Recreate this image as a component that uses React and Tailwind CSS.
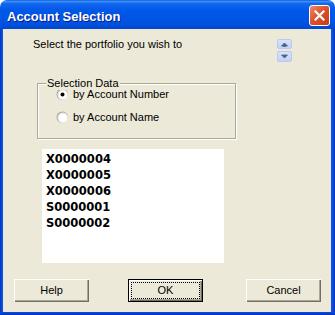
import React from "react";

const FONT = { fontFamily: '"Liberation Sans", Arial, sans-serif' };

function Radio({ checked }) {
  return (
    <svg width="13" height="13" viewBox="0 0 13 13" className="shrink-0">
      <defs>
        <linearGradient id={checked ? "rg1" : "rg2"} x1="0" y1="0" x2="1" y2="1">
          <stop offset="0" stopColor="#8d8b80" />
          <stop offset="0.5" stopColor="#c9c6b8" />
          <stop offset="1" stopColor="#ffffff" />
        </linearGradient>
      </defs>
      <circle cx="6.5" cy="6.5" r="6" fill={`url(#${checked ? "rg1" : "rg2"})`} />
      <circle cx="6.5" cy="6.5" r="4.8" fill="#ffffff" />
      <path d="M2.4 8.6 A4.8 4.8 0 0 1 8.6 2.4" stroke="#e2e0d6" strokeWidth="1" fill="none" />
      {checked && <circle cx="6.5" cy="6.5" r="2" fill="#000000" />}
    </svg>
  );
}

function SpinBtn({ up, h }) {
  return (
    <div
      className={`w-[15px] ${h} rounded-[2px] border border-[#b9c9ef] bg-[linear-gradient(to_bottom,#d8e2fb,#c2d1f6)] flex items-center justify-center`}
    >
      <svg width="7" height="5" viewBox="0 0 7 5">
        {up ? (
          <path d="M0.5 4 L3.5 1 L6.5 4 Z M2 4.5 h3" fill="#4d6185" stroke="#4d6185" strokeWidth="0.8" />
        ) : (
          <path d="M0.5 1 L3.5 4 L6.5 1 Z" fill="#4d6185" stroke="#4d6185" strokeWidth="0.8" />
        )}
      </svg>
    </div>
  );
}

function Button({ label, isDefault }) {
  if (isDefault) {
    return (
      <div className="w-[75px] h-[23px] border border-black bg-[#ECE9D8] flex">
        <div className="flex-1 flex p-[2px] shadow-[inset_1px_1px_0_#fff,inset_-1px_-1px_0_#716F64,inset_-2px_-2px_0_#ACA899]">
          <div className="flex-1 border border-dotted border-black flex items-center justify-center text-[11px] leading-[13px] text-black">
            {label}
          </div>
        </div>
      </div>
    );
  }
  return (
    <div className="w-[75px] h-[23px] bg-[#ECE9D8] flex items-center justify-center text-[11px] leading-[13px] text-black shadow-[inset_1px_1px_0_#fff,inset_-1px_-1px_0_#716F64,inset_-2px_-2px_0_#ACA899]">
      {label}
    </div>
  );
}

export default function App() {
  const items = ["X0000004", "X0000005", "X0000006", "S0000001", "S0000002"];
  return (
    <div className="w-[335px] h-[315px] flex flex-col bg-white" style={FONT}>
      {/* Title bar */}
      <div className="h-[29px] shrink-0 rounded-t-[7px] flex items-start justify-between pl-[7px] pr-[5px] bg-[linear-gradient(to_bottom,#0A5FDE_0%,#3D8EF6_5%,#1468F0_12%,#0058E8_35%,#0054E3_75%,#0049D2_100%)]">
        <div className="pt-[9px] text-[13px] leading-[16px] font-bold text-white [text-shadow:1px_1px_0_#0a1883]">
          Account Selection
        </div>
        <div className="mt-[5px] w-[21px] h-[21px] rounded-[3px] border border-white bg-[linear-gradient(135deg,#EE8A6C_0%,#E0522E_45%,#C63A17_100%)] flex items-center justify-center">
          <svg width="11" height="11" viewBox="0 0 11 11">
            <path d="M1.5 1.5 L9.5 9.5 M9.5 1.5 L1.5 9.5" stroke="#ffffff" strokeWidth="2.2" strokeLinecap="square" />
          </svg>
        </div>
      </div>
      {/* Body with frame */}
      <div className="flex flex-1 min-h-0">
        <div className="w-[3px] bg-[linear-gradient(to_right,#0831BC,#0A4BDD,#0D52E3)]" />
        <div className="w-[328px] h-[283px] bg-[#ECE9D8] flex flex-col">
          {/* Prompt row */}
          <div className="flex items-start justify-between pl-[30px] pr-[39px] pt-[9px]">
            <div className="text-[11px] leading-[13px] text-black">Select the portfolio you wish to</div>
            <div className="mt-[1px] flex flex-col gap-[2px]">
              <SpinBtn up h="h-[10px]" />
              <SpinBtn h="h-[11px]" />
            </div>
          </div>
          {/* Group box */}
          <div className="relative ml-[34px] mt-[21px] w-[199px] h-[56px] border border-[#ACA899] shadow-[inset_1px_1px_0_#fff,1px_1px_0_#fff] pl-[18px] pt-[4px] flex flex-col gap-[10px]">
            <div className="absolute left-[8px] top-[-7px] px-[1px] bg-[#ECE9D8] text-[11px] leading-[13px] text-black">
              Selection Data
            </div>
            <div className="flex items-center gap-[4px] h-[13px]">
              <Radio checked />
              <span className="text-[11px] leading-[13px] text-black">by Account Number</span>
            </div>
            <div className="flex items-center gap-[4px] h-[13px]">
              <Radio />
              <span className="text-[11px] leading-[13px] text-black">by Account Name</span>
            </div>
          </div>
          {/* List box */}
          <div
            className="ml-[39px] mt-[10px] w-[182px] h-[114px] bg-white pl-[4px] pt-[2px]"
            style={{ fontFamily: '"DejaVu Sans", Verdana, sans-serif' }}
          >
            {items.map((it) => (
              <div key={it} className="text-[11.5px] leading-[16px] font-bold text-black">
                {it}
              </div>
            ))}
          </div>
          {/* Buttons */}
          <div className="flex mt-[16px] pl-[11px]">
            <Button label="Help" />
            <div className="ml-[39px]">
              <Button label="OK" isDefault />
            </div>
            <div className="ml-[43px]">
              <Button label="Cancel" />
            </div>
          </div>
        </div>
        <div className="w-[4px] bg-[linear-gradient(to_right,#0D52E3,#0A4BDD,#0831BC)]" />
      </div>
      <div className="h-[3px] shrink-0 bg-[linear-gradient(to_bottom,#0A4BDD,#0831BC)]" />
    </div>
  );
}
